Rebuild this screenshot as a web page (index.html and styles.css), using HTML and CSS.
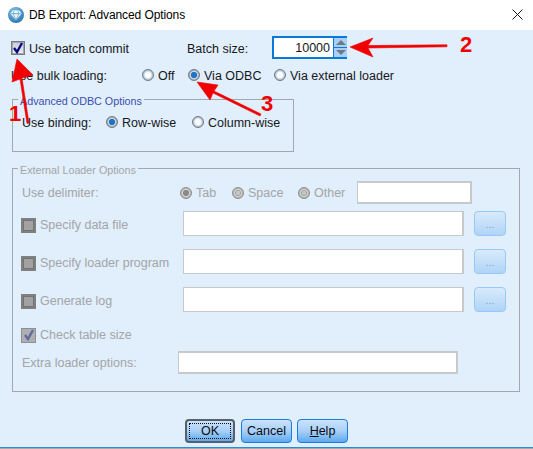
FILE: index.html
```html
<!DOCTYPE html>
<html lang="en">
<head>
<meta charset="utf-8">
<title>DB Export: Advanced Options</title>
<link rel="stylesheet" href="styles.css">
</head>
<body>
<div class="window">
  <header class="titlebar">
    <svg class="app-icon" viewBox="0 0 16 16" width="16" height="16" aria-hidden="true">
      <defs>
        <radialGradient id="sphere" cx="0.4" cy="0.3" r="0.8">
          <stop offset="0" stop-color="#8cc3e8"/>
          <stop offset="1" stop-color="#1f6fae"/>
        </radialGradient>
      </defs>
      <circle cx="8" cy="8" r="8" fill="url(#sphere)"/>
      <path d="M4.600 3.600h6.800l2.200 3L8 13 2.400 6.600z" fill="#eef7fd"/>
      <path d="M2.600 6.600h10.800M6 3.800 5 6.600 8 12.400l3-5.800-1-2.800M5 6.600h6" fill="none" stroke="#6eaad6" stroke-width=".8"/>
    </svg>
    <span class="title-text">DB Export: Advanced Options</span>
    <svg class="close-icon" viewBox="0 0 11 11" width="11" height="11" aria-hidden="true">
      <path d="M.5.5l10 10M10.500.5l-10 10" stroke="#1a1a1a" stroke-width="1" fill="none"/>
    </svg>
  </header>

  <main class="content">
    <div class="row row-batch">
      <span class="check check-on"><svg viewBox="0 0 12 12" width="12" height="12"><path d="M2 6l3 4 5-9" fill="none" stroke="#0a0a80" stroke-width="2.4"/></svg></span>
      <span class="cell-commit">Use batch commit</span>
      <span class="cell-batch">Batch size:</span>
      <span class="spinner">
        <span class="spin-value">10000</span>
        <span class="spin-buttons">
          <span class="spin-btn"><i class="tri-up"></i></span>
          <span class="spin-btn"><i class="tri-down"></i></span>
        </span>
      </span>
    </div>

    <div class="row row-bulk">
      <span class="cell-bulk">Use bulk loading:</span>
      <span class="radio"></span><span class="cell-off">Off</span>
      <span class="radio radio-on"></span><span class="cell-odbc">Via ODBC</span>
      <span class="radio"></span><span class="radio-label">Via external loader</span>
    </div>

    <fieldset class="group group-odbc">
      <legend class="legend-blue">Advanced ODBC Options</legend>
      <div class="row row-binding">
        <span class="cell-binding">Use binding:</span>
        <span class="radio radio-on"></span><span class="cell-rowwise">Row-wise</span>
        <span class="radio"></span><span class="radio-label">Column-wise</span>
      </div>
    </fieldset>

    <fieldset class="group group-loader">
      <legend class="legend-grey">External Loader Options</legend>

      <div class="row row-delim">
        <span class="cell-delim">Use delimiter:</span>
        <span class="radio radio-dis radio-dis-on"></span><span class="cell-tab">Tab</span>
        <span class="radio radio-dis"></span><span class="cell-space">Space</span>
        <span class="radio radio-dis"></span><span class="cell-other">Other</span>
        <span class="field field-other"></span>
      </div>

      <div class="row row-file">
        <span class="check check-dis"></span>
        <span class="cell-file">Specify data file</span>
        <span class="field field-path"></span>
        <span class="browse">...</span>
      </div>
      <div class="row row-file row-file-next">
        <span class="check check-dis"></span>
        <span class="cell-file">Specify loader program</span>
        <span class="field field-path"></span>
        <span class="browse">...</span>
      </div>
      <div class="row row-file row-file-next">
        <span class="check check-dis"></span>
        <span class="cell-file">Generate log</span>
        <span class="field field-path"></span>
        <span class="browse">...</span>
      </div>

      <div class="row row-size">
        <span class="check check-dis check-dis-on"><svg viewBox="0 0 12 12" width="12" height="12"><path d="M2 6l3 4 5-9" fill="none" stroke="#5f6b9c" stroke-width="2.4"/></svg></span>
        <span class="cell-size">Check table size</span>
      </div>
      <div class="row row-extra">
        <span class="cell-extra">Extra loader options:</span>
        <span class="field field-extra"></span>
      </div>
    </fieldset>

    <footer class="actions">
      <span class="btn btn-default"><span class="btn-focus">OK</span></span>
      <span class="btn btn-cancel">Cancel</span>
      <span class="btn btn-help"><u>H</u>elp</span>
    </footer>
  </main>

  <svg class="annotations" viewBox="0 0 533 449" width="533" height="449" aria-hidden="true">
    <g fill="#f00000" stroke="#f00000" stroke-linejoin="round" stroke-width=".6">
      <path d="M17 59 33 75 22 78 29 123 27 123.500 20 79 12 82z"/>
      <path d="M350 47 373 38 368 45.500 447 44.800 447 46.800 368 48 373 57z"/>
      <path d="M197 82 218 85 214 91 261 114 260 116 213 93 210 100z"/>
    </g>
  </svg>
  <span class="num num-1">1</span>
  <span class="num num-2">2</span>
  <span class="num num-3">3</span>
</div>
</body>
</html>
```

FILE: styles.css
```css
* { box-sizing: border-box; }
html, body { margin: 0; padding: 0; }
body {
  width: 533px;
  height: 449px;
  overflow: hidden;
  font-family: "Liberation Sans", Arial, sans-serif;
  font-size: 12.5px;
  color: #16181c;
  background: #fff;
}
.window { position: relative; width: 533px; height: 449px; display: flex; flex-direction: column; }

.titlebar { height: 30px; flex: none; display: flex; align-items: center; padding: 0 10px 0 8px; background: #fff; }
.app-icon { flex: none; margin-right: 5px; }
.title-text { flex: 1; font-size: 12px; letter-spacing: -.1px; color: #000; }
.close-icon { flex: none; margin-top: -2px; }

.content { flex: 1; background: #e1eefb; padding: 6px 0 0 0; border-bottom: 1px solid #2a8ae0; box-shadow: 0 1px 0 #a9a9a9; height: 418px; margin-bottom: 1px; }

.row { display: flex; align-items: center; }
.row-batch { height: 23px; padding-left: 11px; }
.row-bulk { height: 20px; margin-top: 6px; padding-left: 11px; }
.row-binding { height: 20px; margin-top: 4px; }
.row-delim { height: 23px; margin-top: 4px; color: #a3a5a8; }
.row-file { height: 25px; margin: 7px 0 0 -1px; color: #a3a5a8; }
.row-file-next { margin-top: 13px; }
.row-size { height: 16px; margin: 15px 0 0 -1px; color: #a3a5a8; }
.row-extra { height: 23px; margin-top: 8px; color: #a3a5a8; }

.row-batch > span:not(.check):not(.spinner),
.row-bulk > span:not(.radio),
.row-binding > span:not(.radio),
.cell-file { padding-top: 2px; }

.check { flex: none; width: 15px; height: 15px; display: flex; align-items: center; justify-content: center; }
.check-on { width: 14px; height: 14px; margin-right: 4px; border: 1px solid #7a7a80; background: linear-gradient(#c9ccd6, #eceef4); box-shadow: inset 0 0 0 1px #a4a6ae; }
.check-dis { margin-right: 4px; border: 2px solid #808080; background: #a2a2a2; box-shadow: inset 0 0 0 1px #737373; }
.row-file .check-dis { margin-top: 4px; }
.check-dis-on { background: #adafb4; box-shadow: none; border: 1px solid #8f8f92; }

.cell-commit { width: 158px; }
.cell-batch { width: 85px; }
.cell-bulk { width: 131px; }
.cell-off { width: 30px; }
.cell-odbc { width: 70px; }
.cell-binding { width: 84px; }
.cell-rowwise { width: 70px; }
.cell-delim { width: 158px; }
.cell-tab { width: 36px; }
.cell-space { width: 50px; }
.cell-other { width: 43px; }
.cell-file { width: 143px; }
.cell-size { width: 200px; }
.cell-extra { width: 156px; }

.radio {
  flex: none; width: 12px; height: 12px; margin-right: 4px; border-radius: 50%;
  border: 1px solid #6f7a85;
  background: radial-gradient(circle, #fff 0 2.6px, #cfe0f2 3.6px, #b6bdc4 5px);
}
.radio-on { background: radial-gradient(circle, #1f74c8 0 2.8px, #cfdbe8 3.4px, #9aa5b0 5px); }
.radio-dis { border-color: #8f8f8f; background: radial-gradient(circle, #c4c6c8 0 2px, #9c9c9c 2.6px, #d8d8d8 3.4px, #a8a8a8 5px); }
.radio-dis-on { background: radial-gradient(circle, #8a8a8a 0 2.8px, #dcdcdc 3.4px, #a8a8a8 5px); }

.spinner { display: flex; width: 75px; height: 23px; border: 2px solid #0a78d8; background: #fff; }
.spin-value { flex: 1; text-align: right; line-height: 20px; padding-right: 3px; }
.spin-buttons { flex: none; width: 14px; margin-right: -2px; display: flex; flex-direction: column; gap: 1px; background: #0a78d8; border-left: 1px solid #0a78d8; }
.spin-btn { flex: 1; background: #a6d0fb; display: flex; align-items: center; justify-content: center; }
.tri-up { width: 0; height: 0; border: 5px solid transparent; border-top: 0; border-bottom: 5px solid #717880; }
.tri-down { width: 0; height: 0; border: 5px solid transparent; border-bottom: 0; border-top: 5px solid #717880; }

.group { margin: 0; border: 1px solid #a2a8ae; min-width: 0; padding: 0 9px; }
.group legend { padding: 4px 2px 0; margin-left: -4px; font-size: 10.75px; line-height: 13px; }
.legend-blue { color: #3c4fb0; }
.legend-grey { color: #a3a5a8; }
.group-odbc { width: 282px; margin: 6px 0 0 12px; padding-bottom: 19px; }
.group-loader { width: 508px; margin: 8px 0 0 12px; padding-bottom: 17px; }

.field { flex: none; display: block; background: #fff; border: 1px solid #c8c9ca; }
.field-other { width: 115px; height: 23px; border-width: 2px 2px 2px 1px; }
.field-path { width: 281px; height: 25px; border-width: 1px 2px 1px 1px; }
.field-extra { width: 280px; height: 23px; border-width: 2px 2px 2px 1px; }

.browse {
  flex: none; width: 32px; height: 25px; margin-left: 10px; text-align: center;
  border: 1px solid #96c9f5; border-radius: 4px;
  background: linear-gradient(#d9eafb, #afd4f8);
  color: #9aa3ad; font-size: 11px; line-height: 25px;
}

.actions { display: flex; margin: 27px 0 0 185px; gap: 5px; }
.btn {
  display: flex; align-items: center; justify-content: center; height: 24px;
  border: 1px solid #1a7fdc; border-radius: 4px;
  background: linear-gradient(#c9e2fb 0, #a9d0f8 50%, #5ea9ef 100%);
  color: #0a0a14;
}
.btn-default { width: 50px; padding: 2px; border: 2px solid #56606a; margin-right: 1px; }
.btn-focus { flex: 1; align-self: stretch; text-align: center; line-height: 15px; border: 1px dotted #111; }
.btn-cancel { width: 51px; }
.btn-help { width: 51px; }

.annotations { position: absolute; left: 0; top: 0; pointer-events: none; }
.num { position: absolute; font-weight: 700; font-size: 22px; line-height: 22px; color: #f00000; }
.num-1 { left: 9px; top: 103px; }
.num-2 { left: 460px; top: 34px; }
.num-3 { left: 261px; top: 93px; }
```
